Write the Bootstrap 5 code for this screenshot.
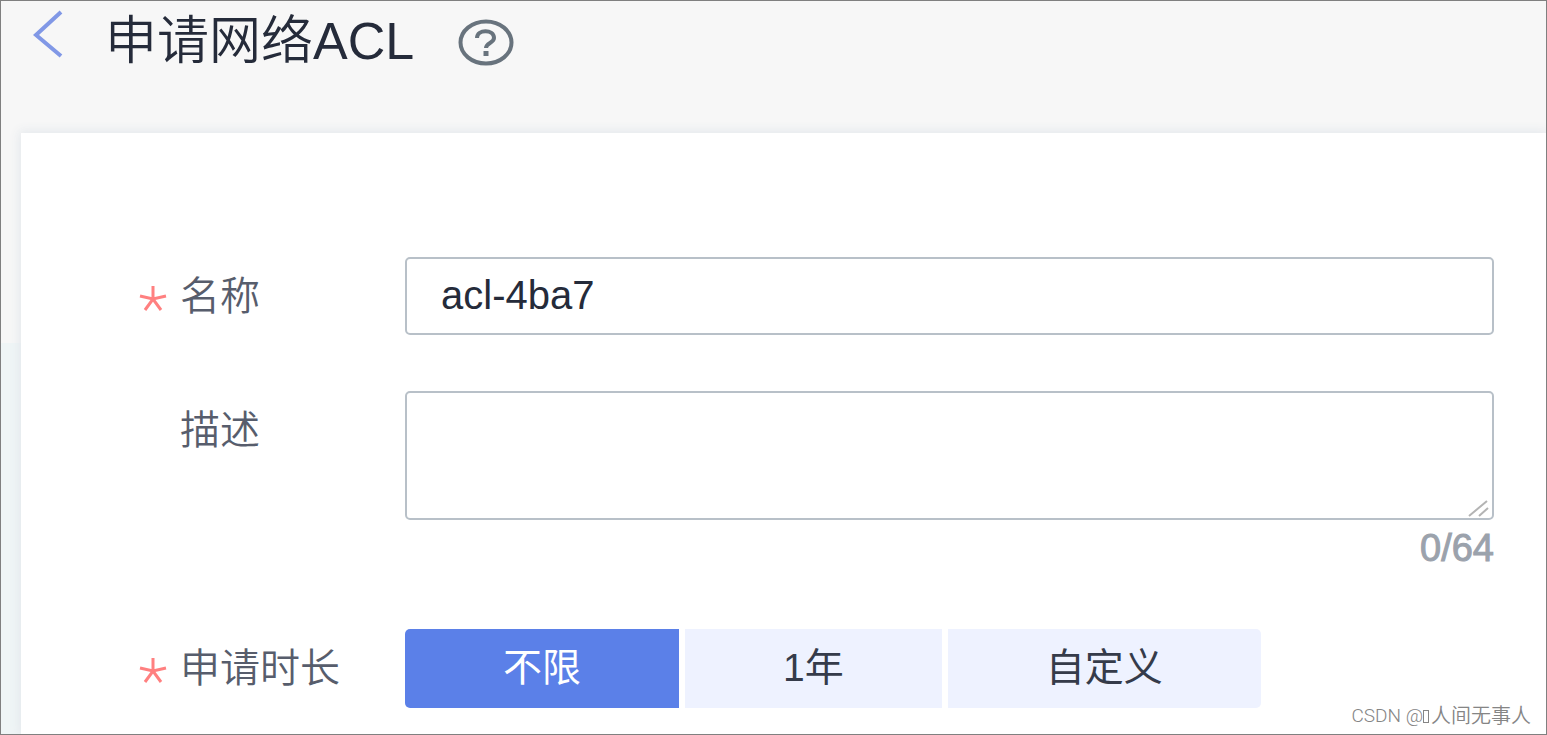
<!DOCTYPE html>
<html lang="zh-CN">
<head>
<meta charset="utf-8">
<meta name="viewport" content="width=device-width, initial-scale=1">
<title>申请网络ACL</title>
<link href="https://cdn.jsdelivr.net/npm/bootstrap@5.3.0/dist/css/bootstrap.min.css" rel="stylesheet">
<style>
body{font-family:"Liberation Sans","Noto Sans CJK SC",sans-serif;background:#f7f7f7;color:#252b3a}
.page-frame{border:1px solid #808080;background:linear-gradient(#f7f7f7 342px,#eff5f6 342px)}
.page-head{height:132px;padding-left:32px;background:#f7f7f7}
.back-link{width:32px;margin-top:9px}
.page-title{font-size:52px;line-height:80px;margin-left:40px;font-weight:350}
.help-btn{margin-left:44px;margin-top:18px}
.panel{margin-left:20px;background:#fff;box-shadow:0 0 10px 2px #e4e8ec;padding:124px 52px 24px 116px}
.field-label{width:268px;font-size:40px;line-height:78px;color:#575d6c;font-weight:350}
.star-mark{width:43px;color:#ff8080}
.star-mark svg{margin-bottom:4px}
.field-box{border:2px solid #b8c0c8;border-radius:5px;font-size:40px;line-height:48px;color:#252b3a;padding:12px 34px}
.field-box:focus{border-color:#5b80e8;box-shadow:none}
.name-box{height:78px;padding-bottom:14px}
.desc-box{height:129px;resize:none}
.grip{right:4px;bottom:3px}
.counter{font-size:38px;line-height:57px;color:#9ba2ac;-webkit-text-stroke:1px #9ba2ac}
.seg{gap:6px}
.seg .btn{font-size:39px;line-height:78px;height:79px;padding:0 98px;border:0;border-radius:0;background:#eef2ff;color:#353b4a}
.seg .btn-check:checked + .btn{background:#5b80e8;color:#fff}
.seg .btn:first-of-type{border-radius:5px 0 0 5px}
.seg .btn:last-of-type{border-radius:0 5px 5px 0}
.credit{right:15px;bottom:4px;font-size:20px;line-height:28px;color:#858585;font-weight:350}
.credit-site{font-family:Roboto,sans-serif;font-size:19px;font-weight:300;white-space:pre}
.tofu{width:6px;height:13px;margin-right:2px;border:1px solid #858585}
</style>
</head>
<body>
<div class="page-frame min-vh-100 position-relative overflow-hidden d-flex flex-column">
  <header class="page-head d-flex align-items-start">
    <a href="#" class="back-link" aria-label="返回"><svg class="d-block" width="32" height="48" viewBox="0 0 32 48" fill="none" stroke="#8198e6" stroke-width="4"><path d="M28 2 3 25l25 21"/></svg></a>
    <h1 class="page-title mb-0">申请网络ACL</h1>
    <button type="button" class="help-btn btn p-0 border-0" aria-label="帮助"><svg class="d-block" width="56" height="47" viewBox="0 0 56 47" fill="none" stroke="#68737d"><ellipse cx="28" cy="23.500" rx="25.500" ry="21" stroke-width="4"/><path d="M19 19c0-9 17-9 17 0 0 5-8 5-8 10" stroke-width="4"/><path d="M28 32v5" stroke-width="5"/></svg></button>
  </header>
  <main class="panel flex-grow-1">
    <form>
      <div class="d-flex mb-5 pb-2">
        <label for="name" class="field-label d-flex flex-shrink-0"><span class="star-mark"><svg width="30" height="30" viewBox="0 0 30 30" fill="none" stroke="currentColor" stroke-width="3"><path d="M16 4v13M3 14l13 3 13-3M8 28l8-11 8 11"/></svg></span>名称</label>
        <input id="name" class="form-control field-box name-box" value="acl-4ba7">
      </div>
      <div class="d-flex">
        <label for="desc" class="field-label d-flex flex-shrink-0"><span class="star-mark"></span>描述</label>
        <div class="flex-grow-1">
          <div class="position-relative">
            <textarea id="desc" class="form-control field-box desc-box" maxlength="64"></textarea>
            <svg class="grip position-absolute pe-none" width="22" height="17" viewBox="0 0 22 17" fill="none" stroke="#b4b4b4" stroke-width="2"><path d="m1 16 18-15M11 16l9-8"/></svg>
          </div>
          <div class="counter text-end">0/64</div>
        </div>
      </div>
      <div class="d-flex mt-5 pt-1">
        <div class="field-label d-flex flex-shrink-0" id="term"><span class="star-mark"><svg width="30" height="30" viewBox="0 0 30 30" fill="none" stroke="currentColor" stroke-width="3"><path d="M16 4v13M3 14l13 3 13-3M8 28l8-11 8 11"/></svg></span>申请时长</div>
        <div class="seg d-flex" role="radiogroup" aria-labelledby="term">
          <input class="btn-check" type="radio" name="term" id="t0" checked><label class="btn" for="t0">不限</label>
          <input class="btn-check" type="radio" name="term" id="t1"><label class="btn" for="t1">1年</label>
          <input class="btn-check" type="radio" name="term" id="t2"><label class="btn" for="t2">自定义</label>
        </div>
      </div>
    </form>
  </main>
  <div class="credit position-absolute d-flex align-items-center"><span class="credit-site">CSDN @</span><span class="tofu"></span><span>人间无事人</span></div>
</div>
<script src="https://cdn.jsdelivr.net/npm/bootstrap@5.3.0/dist/js/bootstrap.bundle.min.js"></script>
</body>
</html>
